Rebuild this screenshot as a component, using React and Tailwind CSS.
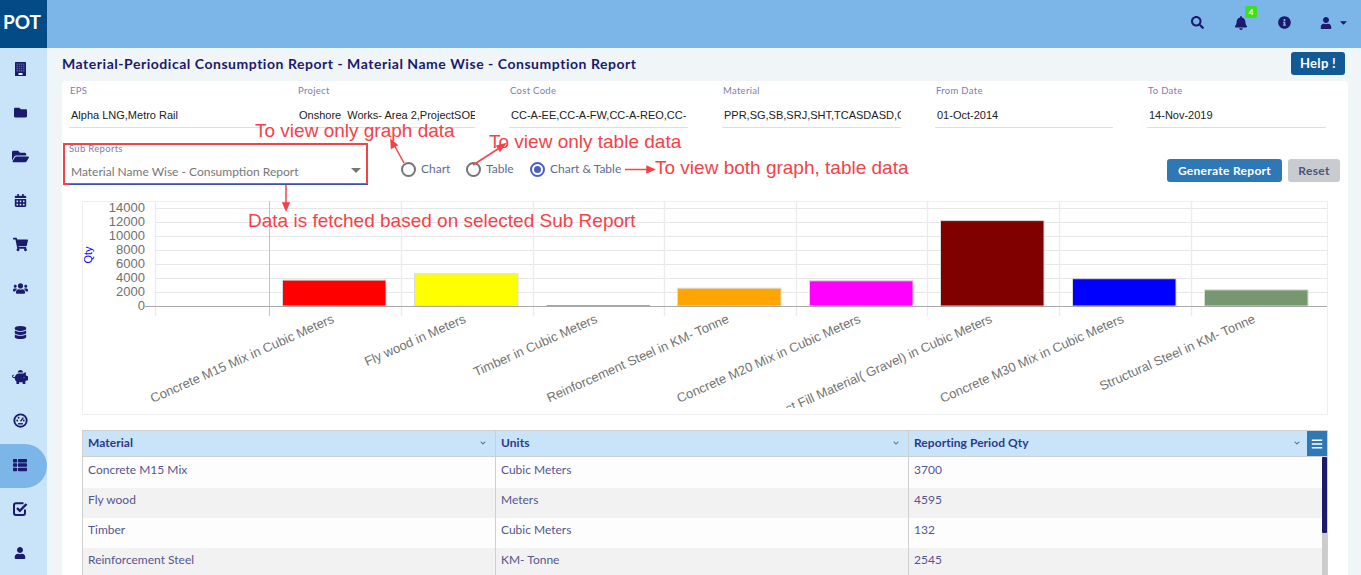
import React from "react";
import {
  FaFolder, FaFolderOpen, FaCalendarAlt, FaShoppingCart, FaUsers, FaDatabase,
  FaPiggyBank, FaThList, FaUser, FaSearch, FaBell, FaInfoCircle, FaCaretDown, FaBars, FaChevronDown,
} from "react-icons/fa";

const Gauge = () => (
  <svg width="15" height="15" viewBox="0 0 16 16">
    <circle cx="8" cy="8" r="6.6" fill="none" stroke="#1a1a6e" strokeWidth="2" />
    <path d="M8 9 L11 5" stroke="#1a1a6e" strokeWidth="1.5" />
    <circle cx="4.5" cy="8" r="1" fill="#1a1a6e" />
    <circle cx="6" cy="5" r="1" fill="#1a1a6e" />
    <circle cx="11.5" cy="8" r="1" fill="#1a1a6e" />
    <path d="M5.5 11.5 H10.5" stroke="#1a1a6e" strokeWidth="1.5" />
  </svg>
);

const Tower = () => (
  <svg width="11" height="14" viewBox="0 0 11 14">
    <rect width="11" height="14" rx="0.5" fill="#1a1a6e" />
    <rect x="1.5" y="1.5" width="8" height="8" fill="#4a5a9c" />
    <path d="M1.5 3.5H9.5M1.5 5.5H9.5M1.5 7.5H9.5M3.5 1.5V9.5M5.5 1.5V9.5M7.5 1.5V9.5" stroke="#1a1a6e" strokeWidth="0.7" />
    <rect x="3.5" y="11" width="4" height="2" fill="#e8f2fb" />
  </svg>
);

const CheckO = () => (
  <svg width="15" height="14" viewBox="0 0 15 14">
    <path d="M10.5 1.2 H3 Q1 1.2 1 3.2 V11 Q1 13 3 13 H10 Q12 13 12 11 V7.5" fill="none" stroke="#1a1a6e" strokeWidth="2" />
    <path d="M4 6 L6.8 8.8 L13.5 2" fill="none" stroke="#1a1a6e" strokeWidth="2.4" />
  </svg>
);

const navIcons = [
  <Tower />, <FaFolder size={13} />, <FaFolderOpen size={17} />, <FaCalendarAlt size={13} />,
  <FaShoppingCart size={15} />, <FaUsers size={15} />, <FaDatabase size={13} />, <FaPiggyBank size={16} />,
  <Gauge />, <FaThList size={14} />, <CheckO />, <FaUser size={12} />,
];

const fields = [
  ["EPS", "Alpha LNG,Metro Rail", "w-[193px] mr-[35px]"],
  ["Project", "Onshore  Works- Area 2,ProjectSOE", "w-[178px] mr-[34px]"],
  ["Cost Code", "CC-A-EE,CC-A-FW,CC-A-REO,CC-", "w-[179px] mr-[34px]"],
  ["Material", "PPR,SG,SB,SRJ,SHT,TCASDASD,C", "w-[179px] mr-[34px]"],
  ["From Date", "01-Oct-2014", "w-[178px] mr-[34px]"],
  ["To Date", "14-Nov-2019", "w-[179px]"],
];

const bars = [
  [282, 3700, "#ff0000", "Concrete M15 Mix in Cubic Meters"],
  [414, 4595, "#ffff00", "Fly wood in Meters"],
  [546, 132, "#a0a0a0", "Timber in Cubic Meters"],
  [677, 2545, "#ffa500", "Reinforcement Steel in KM- Tonne"],
  [809, 3600, "#ff00ff", "Concrete M20 Mix in Cubic Meters"],
  [940, 12200, "#800000", "Compact Fill Material( Gravel) in Cubic Meters"],
  [1072, 3900, "#0000ff", "Concrete M30 Mix in Cubic Meters"],
  [1204, 2300, "#76986f", "Structural Steel in KM- Tonne"],
];

const rows = [
  ["Concrete M15 Mix", "Cubic Meters", "3700"],
  ["Fly wood", "Meters", "4595"],
  ["Timber", "Cubic Meters", "132"],
  ["Reinforcement Steel", "KM- Tonne", "2545"],
];

// Chart drawn in coordinates relative to the chart box (box origin: page x 82, y 201)
const ox = 82, oy = 201;
function Chart() {
  const ticks = [0, 2000, 4000, 6000, 8000, 10000, 12000, 14000];
  const vx = [155, 269, 401, 533, 664, 796, 927, 1059, 1191];
  return (
    <svg width="1246" height="214" className="block" style={{ fontFamily: "'Liberation Sans', sans-serif" }}>
      <defs>
        <clipPath id="xl"><rect x="0" y="0" width="1246" height={408 - oy} /></clipPath>
      </defs>
      <rect x="0.5" y="0.5" width="1245" height="213" fill="#fff" stroke="#eeeeee" />
      {ticks.slice(1).map((t) => {
        const y = 306 - (t / 2000) * 14 - oy + 0.5;
        return <line key={t} x1={155 - ox} x2={1327 - ox} y1={y} y2={y} stroke="#e6e6e6" strokeWidth="1" />;
      })}
      {vx.map((x, i) => (
        <line key={x} x1={x - ox + 0.5} x2={x - ox + 0.5} y1="0" y2={316 - oy} stroke={i === 1 ? "#c4c4c4" : "#ececec"} strokeWidth={i === 1 ? 1 : 1.5} />
      ))}
      {bars.map(([x, v, c]) => {
        const h = (v / 14000) * 98;
        return <rect key={x} x={x - ox + 0.5} y={306 - oy - h} width="103.5" height={h} fill={c} stroke={v < 200 ? "none" : "#d9d9d9"} strokeWidth="1" />;
      })}
      <line x1={145 - ox} x2={1327 - ox} y1={306 - oy + 0.5} y2={306 - oy + 0.5} stroke="#a8a8a8" strokeWidth="1" />
      {ticks.map((t) => (
        <text key={t} x={145 - ox} y={304.5 - (t / 2000) * 14 - oy + 5} textAnchor="end" fontSize="13" fill="#6f6f6f">{t}</text>
      ))}
      <text transform={`translate(${92 - ox},${255 - oy}) rotate(-90)`} textAnchor="middle" fontSize="11" fill="#0000ff">Qty</text>
      <g clipPath="url(#xl)">
        {bars.map(([, , , label], i) => {
          const x = 335 + 131.6 * i - ox;
          const y = 322 - oy;
          return (
            <text key={label} transform={`translate(${x},${y}) rotate(-24)`} textAnchor="end" fontSize="13" fill="#737373">{label}</text>
          );
        })}
      </g>
    </svg>
  );
}

function Radio({ label, on, cls }) {
  return (
    <label className={`flex items-center ${cls}`}>
      <span className={`w-[15px] h-[15px] rounded-full border-2 flex items-center justify-center ${on ? "border-[#4a5fc1]" : "border-[#757575]"}`}>
        {on && <span className="w-[7px] h-[7px] rounded-full bg-[#4a5fc1]" />}
      </span>
      <span className="ml-[5px] text-[12px] text-[#5d6b94]">{label}</span>
    </label>
  );
}

function Annotations() {
  const red = "#f44249";
  const a = "absolute whitespace-nowrap text-[19px] leading-[20px] text-[#f44249] font-['Liberation_Sans',sans-serif]";
  return (
    <>
      <span className={`${a} left-[255px] top-[121px]`}>To view only graph data</span>
      <span className={`${a} left-[489px] top-[132px]`}>To view only table data</span>
      <span className={`${a} left-[655px] top-[158px]`}>To view both graph, table data</span>
      <span className={`${a} left-[248px] top-[211px]`}>Data is fetched based on selected Sub Report</span>
      <svg className="absolute left-0 top-0 pointer-events-none" width="1361" height="575">
        <g stroke={red} strokeWidth="1.5" fill={red}>
          <line x1="404" y1="163" x2="393" y2="143" />
          <path d="M391 140 L397 145 L391.5 148 Z" />
          <line x1="473" y1="165" x2="501" y2="147" />
          <path d="M505 144 L500 151 L497 146 Z" />
          <line x1="625" y1="169.5" x2="648" y2="169.5" />
          <path d="M654 169.5 L647 166.5 L647 172.5 Z" />
          <line x1="286" y1="185" x2="286" y2="204" />
          <path d="M286 210 L283 203 L289 203 Z" />
        </g>
      </svg>
    </>
  );
}

export default function App() {
  return (
    <div className="relative h-[575px] w-[1361px] overflow-hidden bg-[#f0f5f8] font-['Lato',sans-serif]">
      <header className="flex h-12 bg-[#7cb6e8]">
        <div className="w-[47px] bg-[#024b86] flex items-center justify-center pr-[3px] pb-[4px] text-white font-bold text-[19px]">POT</div>
        <div className="flex-1 flex items-center justify-end pb-[3px] text-[#1a1a6e]">
          <FaSearch size={13} className="mr-[30px]" />
          <div className="relative mr-[30px]">
            <FaBell size={14} />
            <span className="absolute left-[11px] -top-[10px] w-[12px] h-[12px] rounded-[2px] bg-[#3de01f] text-white text-[8px] font-bold leading-[12px] text-center">4</span>
          </div>
          <FaInfoCircle size={13} className="mr-[29px]" />
          <FaUser size={12} />
          <FaCaretDown size={11} className="ml-[6px] mr-[12px]" />
        </div>
      </header>
      <div className="flex">
        <nav className="w-[47px] bg-[#c9e4f9] text-[#1a1a6e]">
          {navIcons.map((ic, i) => (
            <div key={i} className={`h-[44px] flex items-center justify-center pr-[7px] pb-[3px] ${i === 9 ? "bg-[#7cb6e8] rounded-r-full" : ""}`}>{ic}</div>
          ))}
        </nav>
        <main className="flex-1 pl-[15px] pr-[13px]">
          <div className="flex items-center justify-between h-[33px] pb-[2px]">
            <h1 className="text-[14px] font-bold tracking-[0.53px] text-[#1a1a6e]">Material-Periodical Consumption Report - Material Name Wise - Consumption Report</h1>
            <button className="mr-[3px] w-[54px] h-[23px] rounded-[3px] bg-[#125a96] text-white text-[13px] font-bold tracking-[0.3px]">Help !</button>
          </div>
          <section className="bg-white rounded-t-[4px] h-[520px] pl-[7px]">
            <div className="flex pt-[4px] h-[47px]">
              {fields.map(([l, v, w]) => (
                <div key={l} className={`${w} border-b border-[#dfdfdf]`}>
                  <div className="text-[9.5px] leading-[12px] tracking-[0.3px] text-[#7d7dac] pl-[1px]">{l}</div>
                  <div className="mt-[11px] pl-[2px] pr-[2px] overflow-hidden whitespace-pre text-[11px] leading-[14px] text-[#222] font-['Liberation_Sans',sans-serif]">{v}</div>
                </div>
              ))}
            </div>
            <div className="flex mt-[15px] -ml-[6px] h-[42px]">
              <div className="relative w-[305px] border-2 border-[#f44249] pl-[4px]">
                <div className="text-[9.5px] leading-[12px] tracking-[0.3px] text-[#7d7dac] -mt-[2px]">Sub Reports</div>
                <div className="mt-[8px] pl-[2px] text-[12px] text-[#777]">Material Name Wise - Consumption Report</div>
                <span className="absolute right-[5px] top-[23px] w-0 h-0 border-x-[5px] border-x-transparent border-t-[5px] border-t-[#777]" />
                <span className="absolute left-[4px] -right-[2px] -bottom-[2px] h-[1px] bg-[#3f51b5]" />
              </div>
              <div className="flex items-center pt-[10px] ml-[33px]">
                <Radio label="Chart" cls="w-[65px]" />
                <Radio label="Table" cls="w-[64px]" />
                <Radio label="Chart & Table" on />
              </div>
              <div className="ml-auto flex items-center gap-[6px] pt-[13px] pr-[8px]">
                <button className="w-[115px] h-[23px] rounded-[3px] bg-[#2e78b5] text-white text-[12px] font-bold tracking-[0.3px]">Generate Report</button>
                <button className="w-[52px] h-[23px] rounded-[3px] bg-[#c8cbd0] text-[#4a5678] text-[12px] font-bold tracking-[0.3px]">Reset</button>
              </div>
            </div>
            <div className="mt-[16px] ml-[13px] w-[1246px]">
              <Chart />
            </div>
            <div className="relative mt-[15px] ml-[13px] w-[1246px] border-x border-t border-[#cfcfcf]">
              <div className="grid grid-cols-[412px_413px_1fr] h-[26px] bg-[#c9e4f9] border-b border-[#cfcfcf] text-[12px] font-bold tracking-[0.05px] text-[#2c3a8a]">
                {["Material", "Units", "Reporting Period Qty"].map((h, i) => (
                  <div key={h} className={`relative flex items-center pl-[5px] pb-[1px] ${i ? "border-l border-[#cfcfcf]" : ""}`}>
                    {h}
                    <FaChevronDown size={6} className={`absolute top-[9px] text-[#5d6b94] ${i === 2 ? "right-[27px]" : "right-[9px]"}`} />
                  </div>
                ))}
              </div>
              <div className="absolute right-0 top-0 w-[20px] h-[25px] bg-[#2e78b5] text-white flex items-center justify-center">
                <FaBars size={12} />
              </div>
              <div className="relative text-[12px] text-[#55558f]">
                {rows.map((r, i) => (
                  <div key={r[0]} className={`grid grid-cols-[412px_413px_1fr] ${i === 0 ? "h-[31px]" : "h-[30px]"} ${i % 2 ? "bg-[#f2f2f2]" : "bg-[#fdfdfd]"}`}>
                    {r.map((c, j) => (
                      <div key={j} className={`pl-[5px] ${i === 0 ? "pt-[4px]" : "pt-[3px]"} ${j ? "border-l border-[#cfcfcf]" : ""}`}>{c}</div>
                    ))}
                  </div>
                ))}
                <div className="absolute right-0 top-0 bottom-0 w-[5px] bg-[#cccccc]">
                  <div className="h-[76px] bg-[#1a1a6e] rounded-[1px]" />
                </div>
              </div>
            </div>
          </section>
        </main>
      </div>
      <Annotations />
    </div>
  );
}
